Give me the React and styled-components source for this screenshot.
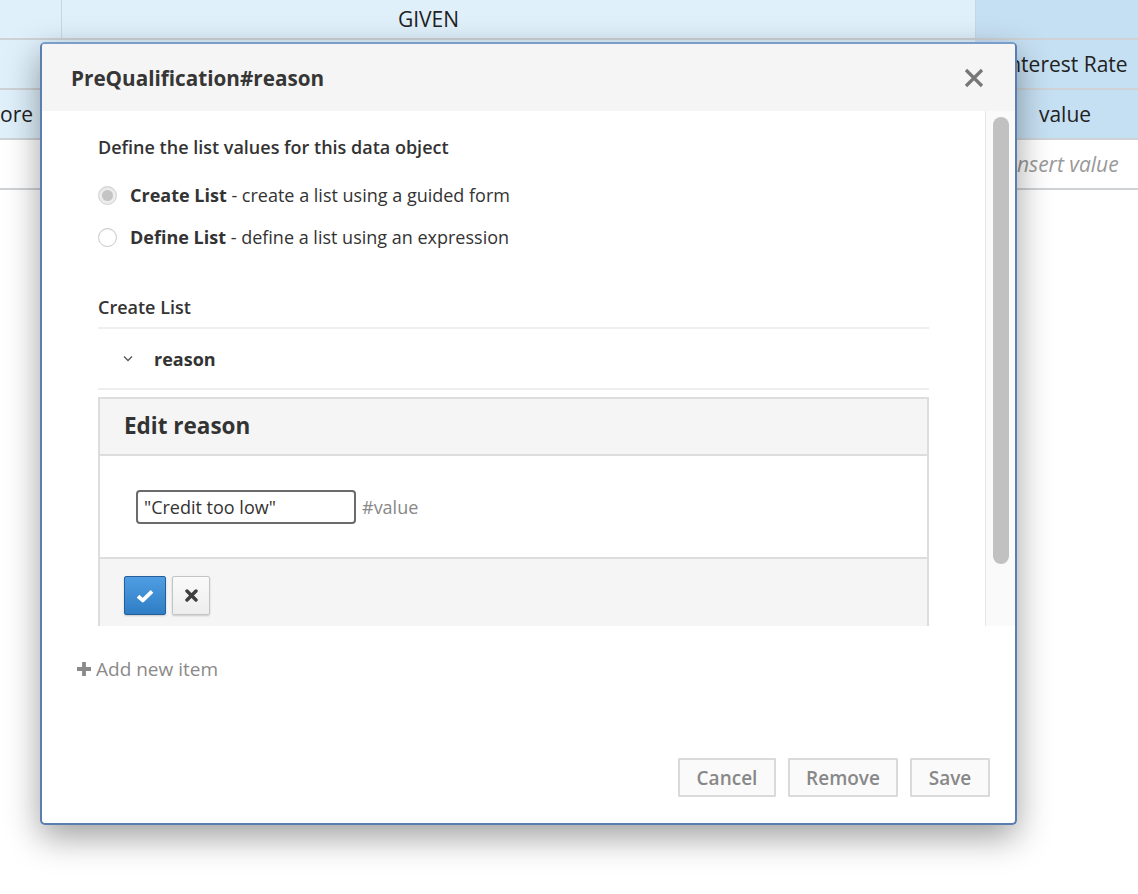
import React from "react";
import styled, { createGlobalStyle } from "styled-components";

const Global = createGlobalStyle`
  html, body { margin: 0; padding: 0; background: #fff; }
  body { font-family: "Open Sans", "DejaVu Sans", sans-serif; color: #333; }
  * { box-sizing: border-box; }
`;

const Page = styled.div`
  position: relative;
  width: 1138px;
  height: 894px;
  overflow: hidden;
  background: #fff;
`;

/* ---------- background table ---------- */
const Table = styled.div`
  display: flex;
  flex-direction: column;
`;
const Row = styled.div`
  display: flex;
  height: ${(p) => p.$h}px;
  border-bottom: 2px solid #cfd3d6;
`;
const Cell = styled.div`
  flex: ${(p) => (p.$w ? `0 0 ${p.$w}px` : "1 1 auto")};
  display: flex;
  align-items: center;
  justify-content: ${(p) => p.$align || "center"};
  padding-left: ${(p) => p.$pl || 0}px;
  padding-right: ${(p) => p.$pr || 0}px;
  background: ${(p) =>
    p.$tone === "dark" ? "#c6e0f3" : p.$tone === "light" ? "#dff0fb" : "#fff"};
  border-left: ${(p) => (p.$line ? "1px solid #c9d6e0" : "none")};
  font-size: 21px;
  color: ${(p) => (p.$muted ? "#999" : "#222")};
  font-style: ${(p) => (p.$muted ? "italic" : "normal")};
  white-space: nowrap;
  overflow: hidden;
`;

/* ---------- modal ---------- */
const Modal = styled.div`
  position: absolute;
  left: 40px;
  top: 42px;
  width: 977px;
  height: 783px;
  border: 2px solid #5b7eb1;
  border-top-color: #7b9dca;
  border-radius: 5px;
  background: #fff;
  box-shadow: 0 12px 34px rgba(0, 0, 0, 0.38);
  display: flex;
  flex-direction: column;
  overflow: hidden;
`;
const Header = styled.div`
  flex: 0 0 67px;
  background: #f5f5f5;
  display: flex;
  align-items: center;
  justify-content: space-between;
  padding: 0 30px 0 29px;
`;
const Title = styled.h4`
  margin: 0;
  font-size: 20.7px;
  font-weight: 700;
  color: #363636;
`;
const CloseBtn = styled.button`
  border: 0;
  background: transparent;
  padding: 0;
  width: 22px;
  height: 22px;
  display: flex;
  align-items: center;
  justify-content: center;
  cursor: pointer;
`;

const ScrollArea = styled.div`
  flex: 0 0 515px;
  display: flex;
  overflow: hidden;
`;
const Viewport = styled.div`
  flex: 1 1 auto;
  overflow: hidden;
`;
const Track = styled.div`
  flex: 0 0 30px;
  background: #fafafa;
  border-left: 1px solid #e6e6e6;
  padding: 6px 6px 0 7px;
`;
const Thumb = styled.div`
  height: 447px;
  border-radius: 8px;
  background: #c1c1c1;
`;
const ScrollContent = styled.div`
  padding: 24px 56px 55px 56px;
`;
const Lead = styled.p`
  margin: 0 0 15px;
  font-size: 18px;
  line-height: 24px;
  font-weight: 600;
  color: #333;
`;
const RadioRow = styled.label`
  display: flex;
  align-items: center;
  height: 42px;
  font-size: 18px;
  color: #333;
  gap: 13px;
  b { font-weight: 700; }
`;
const RadioDot = styled.span`
  flex: 0 0 19px;
  width: 19px;
  height: 19px;
  border-radius: 50%;
  border: 1px solid ${(p) => (p.$on ? "#d2d2d2" : "#c8c8c8")};
  background: ${(p) => (p.$on ? "#ececec" : "#fff")};
  display: flex;
  align-items: center;
  justify-content: center;
  box-shadow: inset 0 1px 1px rgba(0, 0, 0, 0.06);
  &::after {
    content: "";
    width: 11px;
    height: 11px;
    border-radius: 50%;
    background: ${(p) => (p.$on ? "#c4c4c4" : "transparent")};
  }
`;
const SectionTitle = styled.div`
  margin-top: 37px;
  font-size: 18px;
  line-height: 24px;
  font-weight: 600;
  color: #333;
  padding-bottom: 8px;
  border-bottom: 2px solid #eeeeee;
`;
const ItemRow = styled.div`
  height: 61px;
  display: flex;
  align-items: center;
  padding-left: 25px;
  gap: 21px;
  border-bottom: 2px solid #eeeeee;
  font-size: 18px;
  font-weight: 700;
  color: #333;
`;
const Panel = styled.div`
  margin-top: 7px;
  border: 2px solid #dddddd;
`;
const PanelHead = styled.div`
  height: 57px;
  background: #f5f5f5;
  border-bottom: 2px solid #dddddd;
  display: flex;
  align-items: center;
  padding: 0 0 3px 24px;
  font-size: 22.5px;
  font-weight: 700;
  color: #333;
`;
const PanelBody = styled.div`
  height: 103px;
  border-bottom: 2px solid #dddddd;
  display: flex;
  align-items: center;
  padding-left: 36px;
  gap: 6px;
`;
const ValueInput = styled.input`
  width: 220px;
  height: 34px;
  border: 2px solid #6b6b6b;
  border-radius: 4px;
  padding: 0 6px;
  font-family: "Open Sans", sans-serif;
  font-size: 18px;
  color: #333;
  outline: none;
`;
const Hint = styled.span`
  font-size: 18px;
  color: #888;
`;
const PanelFoot = styled.div`
  background: #f5f5f5;
  padding: 17px 24px;
  display: flex;
  gap: 6px;
`;
const IconBtn = styled.button`
  width: ${(p) => (p.$primary ? 42 : 38)}px;
  height: 39px;
  padding: 0;
  display: flex;
  align-items: center;
  justify-content: center;
  border-radius: 2px;
  border: 1px solid ${(p) => (p.$primary ? "#245f9c" : "#c4c4c4")};
  background: ${(p) =>
    p.$primary
      ? "linear-gradient(#4f9ee3, #2f7dc4)"
      : "linear-gradient(#fafafa, #ededed)"};
  box-shadow: 0 1px 2px rgba(0, 0, 0, 0.18);
  cursor: pointer;
`;

const AddRow = styled.div`
  padding: 30px 0 0 34px;
  display: flex;
  gap: 4px;
  height: 86px;
  align-items: flex-start;
  font-size: 19px;
  line-height: 26px;
  color: #8a8a8a;
`;
const AddIcon = styled.span`
  display: flex;
  height: 26px;
  align-items: center;
`;
const Footer = styled.div`
  margin-top: auto;
  display: flex;
  justify-content: flex-end;
  gap: 12px;
  padding: 0 25px 26px 0;
`;
const FootBtn = styled.button`
  width: ${(p) => p.$w}px;
  height: 39px;
  padding: 0;
  border: 2px solid #dadada;
  border-radius: 1px;
  background: #fafafa;
  font-family: "Open Sans", sans-serif;
  font-size: 19px;
  font-weight: 600;
  color: #888;
  cursor: pointer;
`;

const CloseIcon = () => (
  <svg width="20" height="20" viewBox="0 0 20 20">
    <path d="M2 2 L18 18 M18 2 L2 18" stroke="#777" strokeWidth="3.2" />
  </svg>
);
const Chevron = () => (
  <svg width="10" height="7" viewBox="0 0 10 7">
    <path d="M1 1.5 L5 5.5 L9 1.5" stroke="#555" strokeWidth="1.3" fill="none" />
  </svg>
);
const CheckIcon = () => (
  <svg width="18" height="14" viewBox="0 0 18 14">
    <path d="M2 7.2 L6.8 11.4 L16 2.4" stroke="#fff" strokeWidth="3.8" fill="none" strokeLinejoin="round" />
  </svg>
);
const XIcon = () => (
  <svg width="13" height="13" viewBox="0 0 13 13">
    <path d="M2 2 L11 11 M11 2 L2 11" stroke="#3f3f3f" strokeWidth="3.4" strokeLinecap="round" />
  </svg>
);
const PlusIcon = () => (
  <svg width="16" height="16" viewBox="0 0 16 16">
    <path d="M8 1 V15 M1 8 H15" stroke="#8a8a8a" strokeWidth="3.8" />
  </svg>
);

export default function App() {
  return (
    <Page>
      <Global />
      <Table>
        <Row $h={40}>
          <Cell $w={61} $tone="light" />
          <Cell $tone="light" $line $pr={180}>GIVEN</Cell>
          <Cell $w={163} $tone="dark" $line />
        </Row>
        <Row $h={50}>
          <Cell $tone="light" />
          <Cell $w={163} $tone="dark" $pl={17}>Interest Rate</Cell>
        </Row>
        <Row $h={50}>
          <Cell $tone="light" $align="flex-start">ore</Cell>
          <Cell $w={163} $tone="dark" $pl={17}>value</Cell>
        </Row>
        <Row $h={50}>
          <Cell />
          <Cell $w={163} $pl={17} $muted>Insert value</Cell>
        </Row>
      </Table>

      <Modal>
        <Header>
          <Title>PreQualification#reason</Title>
          <CloseBtn aria-label="Close"><CloseIcon /></CloseBtn>
        </Header>
        <ScrollArea>
          <Viewport>
            <ScrollContent>
              <Lead>Define the list values for this data object</Lead>
              <RadioRow>
                <RadioDot $on />
                <span><b>Create List</b> - create a list using a guided form</span>
              </RadioRow>
              <RadioRow>
                <RadioDot />
                <span><b>Define List</b> - define a list using an expression</span>
              </RadioRow>
              <SectionTitle>Create List</SectionTitle>
              <ItemRow>
                <Chevron />
                <span>reason</span>
              </ItemRow>
              <Panel>
                <PanelHead>Edit reason</PanelHead>
                <PanelBody>
                  <ValueInput defaultValue={'"Credit too low"'} />
                  <Hint>#value</Hint>
                </PanelBody>
                <PanelFoot>
                  <IconBtn $primary aria-label="OK"><CheckIcon /></IconBtn>
                  <IconBtn aria-label="Cancel"><XIcon /></IconBtn>
                </PanelFoot>
              </Panel>
            </ScrollContent>
          </Viewport>
          <Track>
            <Thumb />
          </Track>
        </ScrollArea>
        <AddRow>
          <AddIcon><PlusIcon /></AddIcon>
          <span>Add new item</span>
        </AddRow>
        <Footer>
          <FootBtn $w={98}>Cancel</FootBtn>
          <FootBtn $w={110}>Remove</FootBtn>
          <FootBtn $w={80}>Save</FootBtn>
        </Footer>
      </Modal>
    </Page>
  );
}
